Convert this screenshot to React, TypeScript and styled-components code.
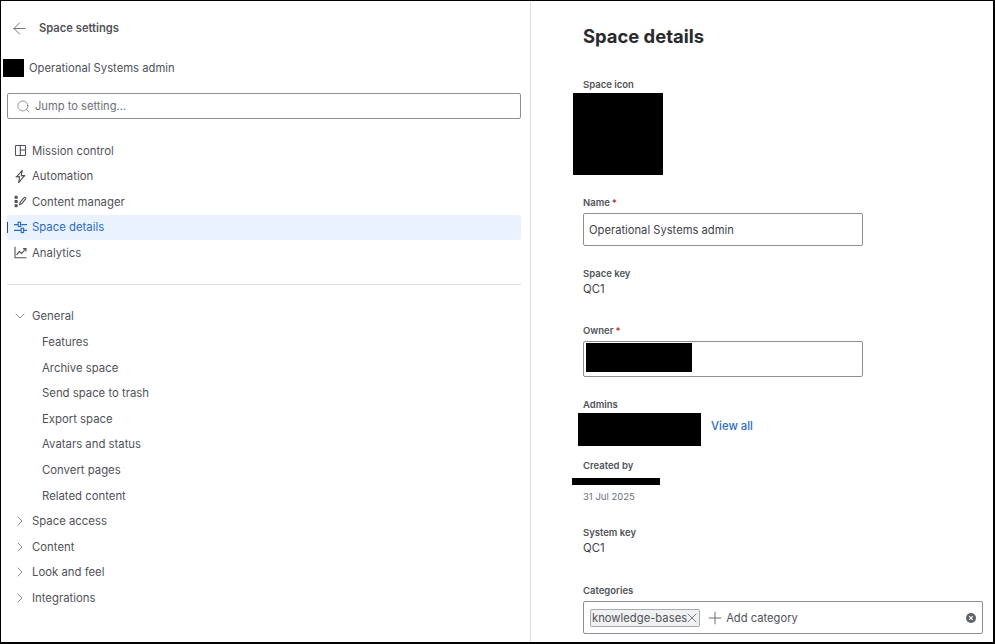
import React from "react";
import styled, { createGlobalStyle } from "styled-components";
import { ArrowLeft, Search, ChevronDown, ChevronRight, X, Plus } from "lucide-react";

const Global = createGlobalStyle`
  * { box-sizing: border-box; }
  html, body { margin: 0; padding: 0; background: #fff; }
  body { font-family: Inter, "Liberation Sans", sans-serif; color: #505258; }
`;

const Page = styled.div`
  width: 995px;
  height: 644px;
  border-top: 1px solid #000;
  border-left: 1px solid #000;
  border-right: 2px solid #000;
  border-bottom: 2px solid #000;
  display: flex;
  overflow: hidden;
  background: #fff;
`;

const Sidebar = styled.aside`
  width: 530px;
  flex: none;
  padding: 0 9px 0 6px;
  border-right: 1px solid #dddee1;
`;

const Header = styled.div`
  height: 54px;
  display: flex;
  align-items: center;
  gap: 10px;
  padding-left: 3px;
  font-size: 11.2px;
  font-weight: 600;
  color: #505258;
`;

const SpaceRow = styled.div`
  height: 18px;
  margin: 4px 0 0 -4px;
  display: flex;
  align-items: center;
  gap: 5px;
  font-size: 11.25px;
`;

const Redaction = styled.div<{ $w: number; $h: number }>`
  width: ${(p) => p.$w}px;
  height: ${(p) => p.$h}px;
  background: #000;
  flex: none;
`;

const SearchBox = styled.div`
  height: 26px;
  margin-top: 16px;
  display: flex;
  align-items: center;
  gap: 4px;
  padding-left: 8px;
  border: 1px solid #8c8f97;
  border-radius: 2px;
  font-size: 11.15px;
  color: #6b6e76;
`;

const Nav = styled.nav<{ $top: number }>`
  margin-top: ${(p) => p.$top}px;
`;

const NavRow = styled.div<{ $active?: boolean }>`
  position: relative;
  height: 25.6px;
  display: flex;
  align-items: center;
  gap: 5px;
  padding-left: 7px;
  font-size: 11.35px;
  border-radius: 3px;
  color: ${(p) => (p.$active ? "#2a6cc4" : "#505258")};
  background: ${(p) => (p.$active ? "#e9f2fe" : "transparent")};
  ${(p) =>
    p.$active
      ? `&::before { content: ""; position: absolute; left: 0; top: 7px; width: 1px; height: 11px; background: #1c4f91; }`
      : ""}
`;

const TreeRow = styled.div`
  height: 25.6px;
  display: flex;
  align-items: center;
  gap: 4px;
  padding-left: 5px;
  font-size: 11.35px;
`;

const ChildRow = styled.div`
  height: 25.6px;
  display: flex;
  align-items: center;
  padding-left: 35px;
  font-size: 11.35px;
`;

const Divider = styled.hr`
  margin: 18.2px 0 0;
  border: 0;
  height: 1px;
  background: #dddee1;
`;

const Main = styled.main`
  flex: 1;
  padding: 23px 0 0 52px;
  min-width: 0;
`;

const Title = styled.h1`
  margin: 0;
  font-size: 18.4px;
  line-height: 24px;
  font-weight: 700;
  color: #292a2e;
`;

const Label = styled.div<{ $top: number }>`
  margin-top: ${(p) => p.$top}px;
  font-size: 9.5px;
  line-height: 14px;
  font-weight: 600;
  color: #505258;
`;

const Required = styled.span`
  color: #ae2e24;
  margin-left: 2px;
`;

const Value = styled.div<{ $top: number }>`
  margin-top: ${(p) => p.$top}px;
  font-size: 11.35px;
  line-height: 16px;
  color: #3f4147;
`;

const IconBlock = styled(Redaction)`
  margin: 1px 0 0 -10px;
`;

const InputBox = styled.div<{ $h: number; $w: number; $top: number }>`
  width: ${(p) => p.$w}px;
  height: ${(p) => p.$h}px;
  margin-top: ${(p) => p.$top}px;
  display: flex;
  align-items: center;
  border: 1px solid #8c8f97;
  border-radius: 2px;
  font-size: 11.2px;
  color: #3f4147;
`;

const NameInput = styled(InputBox)`
  padding-left: 5px;
`;

const OwnerInput = styled(InputBox)`
  align-items: flex-start;
  padding: 1px 0 0 2px;
`;

const AdminsRow = styled.div`
  margin: 1px 0 0 -5px;
  display: flex;
  align-items: center;
  gap: 10px;
`;

const Link = styled.span`
  font-size: 11.35px;
  font-weight: 500;
  color: #2a6cc4;
  margin-top: -7px;
`;

const CreatorBar = styled(Redaction)`
  margin: 5px 0 0 -11px;
`;

const DateText = styled.div`
  margin-top: 5px;
  font-size: 9.5px;
  line-height: 14px;
  color: #6b6e76;
`;

const CategoriesInput = styled(InputBox)`
  padding: 0 6px 0 6px;
`;

const Tag = styled.div`
  height: 18px;
  display: flex;
  align-items: center;
  padding: 0 2px 0 1px;
  background: #f0f1f2;
  border: 1px solid #a8aab0;
  border-radius: 2px;
  font-size: 11.25px;
  color: #505258;
`;

const TagClose = styled(X)`
  margin: 0 -3px;
`;

const AddCategory = styled.div`
  margin-left: 5px;
  display: flex;
  align-items: center;
  gap: 1px;
  font-size: 11.2px;
  color: #505258;
  flex: 1;
`;

const ic = {
  width: 13,
  height: 13,
  viewBox: "0 0 13 13",
  fill: "none",
  stroke: "currentColor",
  strokeWidth: 1.1,
  style: { flex: "none" },
} as const;

const PanelIcon = () => (
  <svg {...ic}>
    <rect x="1.5" y="1.5" width="10" height="10" rx="0.8" />
    <path d="M6.3 1.5v10M6.3 6h5.2" />
  </svg>
);
const BoltIcon = () => (
  <svg {...ic}>
    <path d="M8.2.4 2.6 6.8h3.1L4.6 12.6l6-7H7.3z" strokeLinejoin="round" />
    <path d="M1.6 6.8h4M7.5 5.6h3.6" />
  </svg>
);
const ContentIcon = () => (
  <svg {...ic}>
    <rect x="0.6" y="0.8" width="3" height="3" fill="currentColor" stroke="none" />
    <rect x="0.6" y="5" width="3" height="3" fill="currentColor" stroke="none" />
    <rect x="0.6" y="9.2" width="3" height="3" fill="currentColor" stroke="none" />
    <path d="M5.5 9.8 6.1 7.4 10 2.6a1 1 0 0 1 1.6 1.2L7.7 8.8z" strokeLinejoin="round" />
  </svg>
);
const SlidersIcon = () => (
  <svg {...ic}>
    <path d="M0 3.6h4M7.2 3.6H13M0 9.4h7M10 9.4h3" />
    <rect x="4.2" y="1.2" width="2.4" height="4.4" />
    <rect x="7.2" y="7.2" width="2.4" height="4.4" />
  </svg>
);
const ChartIcon = () => (
  <svg {...ic}>
    <path d="M1 .8v11h11.5" />
    <path d="M2.6 8.8 5.4 5.6l2.2 1.8 4-4.4M9 2.6h3v3" />
  </svg>
);
const ClearIcon = () => (
  <svg width="10" height="10" viewBox="0 0 10 10">
    <circle cx="5" cy="5" r="5" fill="#5f6269" />
    <path d="M3.2 3.2l3.6 3.6M6.8 3.2 3.2 6.8" stroke="#fff" strokeWidth="1.1" />
  </svg>
);

const nav = [
  { label: "Mission control", icon: <PanelIcon /> },
  { label: "Automation", icon: <BoltIcon /> },
  { label: "Content manager", icon: <ContentIcon /> },
  { label: "Space details", icon: <SlidersIcon />, active: true },
  { label: "Analytics", icon: <ChartIcon /> },
];
const children = ["Features", "Archive space", "Send space to trash", "Export space", "Avatars and status", "Convert pages", "Related content"];
const collapsed = ["Space access", "Content", "Look and feel", "Integrations"];

export default function App() {
  return (
    <>
      <Global />
      <Page>
        <Sidebar>
          <Header>
            <ArrowLeft size={19} strokeWidth={1} />
            Space settings
          </Header>
          <SpaceRow>
            <Redaction $w={21} $h={18} />
            Operational Systems admin
          </SpaceRow>
          <SearchBox>
            <Search size={15} strokeWidth={1.1} />
            Jump to setting...
          </SearchBox>
          <Nav $top={18.8}>
            {nav.map((n) => (
              <NavRow key={n.label} $active={n.active}>
                {n.icon}
                {n.label}
              </NavRow>
            ))}
          </Nav>
          <Divider />
          <Nav $top={18.7}>
            <TreeRow>
              <ChevronDown size={16} strokeWidth={1} />
              General
            </TreeRow>
            {children.map((c) => (
              <ChildRow key={c}>{c}</ChildRow>
            ))}
            {collapsed.map((c) => (
              <TreeRow key={c}>
                <ChevronRight size={16} strokeWidth={1} />
                {c}
              </TreeRow>
            ))}
          </Nav>
        </Sidebar>
        <Main>
          <Title>Space details</Title>
          <Label $top={30}>Space icon</Label>
          <IconBlock $w={90} $h={82} />
          <Label $top={21}>
            Name<Required>*</Required>
          </Label>
          <NameInput $w={280} $h={33} $top={3}>
            Operational Systems admin
          </NameInput>
          <Label $top={21}>Space key</Label>
          <Value $top={0}>QC1</Value>
          <Label $top={27}>
            Owner<Required>*</Required>
          </Label>
          <OwnerInput $w={280} $h={36} $top={3}>
            <Redaction $w={106} $h={29} />
          </OwnerInput>
          <Label $top={21}>Admins</Label>
          <AdminsRow>
            <Redaction $w={123} $h={33} />
            <Link>View all</Link>
          </AdminsRow>
          <Label $top={13}>Created by</Label>
          <CreatorBar $w={88} $h={7} />
          <DateText>31 Jul 2025</DateText>
          <Label $top={22}>System key</Label>
          <Value $top={0}>QC1</Value>
          <Label $top={28}>Categories</Label>
          <CategoriesInput $w={400} $h={33} $top={3}>
            <Tag>
              knowledge-bases
              <TagClose size={16} strokeWidth={1.1} />
            </Tag>
            <AddCategory>
              <Plus size={20} strokeWidth={1} />
              Add category
            </AddCategory>
            <ClearIcon />
          </CategoriesInput>
        </Main>
      </Page>
    </>
  );
}
